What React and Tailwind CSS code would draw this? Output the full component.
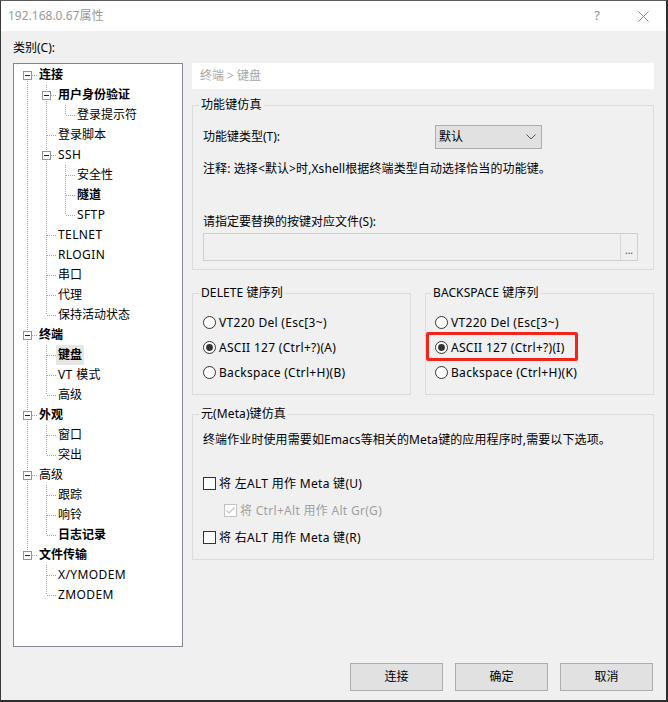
import React from "react";

const FONT = "font-['Noto_Sans','Noto_Sans_CJK_SC',sans-serif]";

function Cell({ type, box }) {
  const stroke = "#a3a3a3";
  const v = (y1, y2) => (
    <line x1="9.5" y1={y1} x2="9.5" y2={y2} stroke={stroke} strokeDasharray="1 1" shapeRendering="crispEdges" />
  );
  const h = <line x1={box ? 14 : 10} y1="10.5" x2="19" y2="10.5" stroke={stroke} strokeDasharray="1 1" shapeRendering="crispEdges" />;
  return (
    <svg width="19" height="20" className="block shrink-0">
      {type === "P" && v(0, 20)}
      {type === "T" && <>{v(0, 20)}{h}</>}
      {type === "L" && <>{v(0, 10)}{h}</>}
      {type === "F" && <>{v(10, 20)}{h}</>}
      {box && (
        <>
          <rect x="5.5" y="6.5" width="8" height="8" fill="#fff" stroke="#8e959e" shapeRendering="crispEdges" />
          <line x1="7" y1="10.5" x2="12" y2="10.5" stroke="#222" shapeRendering="crispEdges" />
        </>
      )}
    </svg>
  );
}

const tree = [
  { c: ["F"], box: true, t: "连接", b: true },
  { c: ["P", "T"], box: true, t: "用户身份验证", b: true },
  { c: ["P", "P", "L"], t: "登录提示符" },
  { c: ["P", "T"], t: "登录脚本" },
  { c: ["P", "T"], box: true, t: "SSH", l: true },
  { c: ["P", "P", "T"], t: "安全性" },
  { c: ["P", "P", "T"], t: "隧道", b: true },
  { c: ["P", "P", "L"], t: "SFTP", l: true },
  { c: ["P", "T"], t: "TELNET", l: true },
  { c: ["P", "T"], t: "RLOGIN", l: true },
  { c: ["P", "T"], t: "串口" },
  { c: ["P", "T"], t: "代理" },
  { c: ["P", "L"], t: "保持活动状态" },
  { c: ["T"], box: true, t: "终端", b: true },
  { c: ["P", "T"], t: "键盘", b: true, sel: true },
  { c: ["P", "T"], t: "VT 模式", l: true },
  { c: ["P", "L"], t: "高级" },
  { c: ["T"], box: true, t: "外观", b: true },
  { c: ["P", "T"], t: "窗口" },
  { c: ["P", "L"], t: "突出" },
  { c: ["T"], box: true, t: "高级" },
  { c: ["P", "T"], t: "跟踪" },
  { c: ["P", "T"], t: "响铃" },
  { c: ["P", "L"], t: "日志记录", b: true },
  { c: ["L"], box: true, t: "文件传输", b: true },
  { c: ["B", "T"], t: "X/YMODEM", l: true },
  { c: ["B", "L"], t: "ZMODEM", l: true },
];

function Radio({ checked, label }) {
  return (
    <div className="flex h-[25px] items-center">
      <svg width="13" height="13" className="block shrink-0">
        <circle cx="6.5" cy="6.5" r="6" fill="#fff" stroke="#333" />
        {checked && <circle cx="6.5" cy="6.5" r="3.4" fill="#333" />}
      </svg>
      <span className="ml-[3px] leading-[16px] whitespace-nowrap tracking-[0.3px]">{label}</span>
    </div>
  );
}

function Check({ label, disabled, checked, indent }) {
  const c = disabled ? "#c2c2c2" : "#333";
  return (
    <div className={`flex h-[27px] items-center ${indent ? "pl-[21px]" : ""}`}>
      <svg width="13" height="13" className="block shrink-0">
        <rect x="0.5" y="0.5" width="12" height="12" fill="#fff" stroke={c} shapeRendering="crispEdges" />
        {checked && <polyline points="2.5,6.5 5,9 10.5,3.5" fill="none" stroke={c} strokeWidth="1.2" />}
      </svg>
      <span className={`ml-[3px] leading-[16px] whitespace-nowrap tracking-[0.3px] ${disabled ? "text-[#a0a0a0]" : ""}`}>{label}</span>
    </div>
  );
}

function Legend({ children }) {
  return <legend className="ml-[-4px] px-[2px] leading-[16px] tracking-[0.1px]">{children}</legend>;
}

export default function App() {
  return (
    <div className={`${FONT} text-[12px] text-black w-[668px] h-[702px] flex flex-col border-t border-l border-r-2 border-b-2 border-t-[#5a5a5a] border-l-[#3a3a3a] border-r-[#2e2e2e] border-b-[#2e2e2e] bg-[#f0f0f0]`}>
      {/* title bar */}
      <div className="h-[30px] bg-white flex items-center justify-between shrink-0">
        <span className="pl-[7px] text-[#999999] leading-[16px]">192.168.0.67属性</span>
        <div className="flex h-full">
          <div className="w-[46px] h-full flex items-center justify-center text-[#8a8a8a] text-[13px]">?</div>
          <div className="w-[46px] h-full flex items-center justify-center">
            <svg width="11" height="11">
              <line x1="0.5" y1="0.5" x2="10.5" y2="10.5" stroke="#8a8a8a" />
              <line x1="10.5" y1="0.5" x2="0.5" y2="10.5" stroke="#8a8a8a" />
            </svg>
          </div>
        </div>
      </div>

      {/* body */}
      <div className="flex-1 flex flex-col px-[12px] pt-[9px]">
        <div className="leading-[16px] h-[16px]">类别(C):</div>
        <div className="mt-[7px] flex gap-[9px]">
          {/* tree */}
          <div className="w-[170px] h-[584px] bg-white border border-[#828790] pt-[1px] pl-[4px] shrink-0">
            {tree.map((r, i) => (
              <div key={i} className="flex h-[20px] items-stretch">
                {r.c.map((c, j) => (
                  <Cell key={j} type={c} box={r.box && j === r.c.length - 1} />
                ))}
                <span
                  className={`flex items-center px-[2px] whitespace-nowrap ${r.b ? "font-bold" : ""} ${r.sel ? "bg-[#e6e6e6]" : ""} ${r.l ? "tracking-[0.4px]" : ""}`}
                >
                  {r.t}
                </span>
              </div>
            ))}
          </div>

          {/* right column */}
          <div className="w-[462px] flex flex-col">
            <div className="h-[26px] bg-white flex items-center pl-[8px] text-[#a6a6a6]">终端 &gt; 键盘</div>

            <fieldset className="mt-[8px] border border-[#dcdcdc] pl-[10px] pb-[8px]">
              <Legend>功能键仿真</Legend>
              <div className="mt-[12px] flex items-center h-[24px]">
                <span className="w-[232px] leading-[16px]">功能键类型(T):</span>
                <div className="w-[107px] h-[24px] bg-[#e1e1e1] border border-[#adadad] flex items-center justify-between pl-[3px] pr-[5px]">
                  <span className="leading-[16px]">默认</span>
                  <svg width="10" height="6">
                    <polyline points="0.5,0.5 5,5 9.5,0.5" fill="none" stroke="#555" />
                  </svg>
                </div>
              </div>
              <div className="mt-[12px] leading-[16px] whitespace-nowrap tracking-[0.1px]">注释: 选择&lt;默认&gt;时,Xshell根据终端类型自动选择恰当的功能键。</div>
              <div className="mt-[37px] leading-[16px]">请指定要替换的按键对应文件(S):</div>
              <div className="mt-[3px] w-[435px] h-[28px] border border-[#cfcfcf] bg-[#f0f0f0] flex justify-end">
                <div className="w-[17px] h-full border-l border-[#d6d6d6] flex items-end justify-center pb-[5px] text-[10px] leading-[10px] text-[#444]">...</div>
              </div>
            </fieldset>

            <div className="mt-[15px] flex gap-[14px]">
              <fieldset className="w-[219px] border border-[#dcdcdc] pl-[10px] pb-[9px]">
                <Legend>DELETE 键序列</Legend>
                <div className="mt-[9px]">
                  <Radio label="VT220 Del (Esc[3~)" />
                  <Radio checked label="ASCII 127 (Ctrl+?)(A)" />
                  <Radio label="Backspace (Ctrl+H)(B)" />
                </div>
              </fieldset>
              <fieldset className="w-[229px] border border-[#dcdcdc] pl-[9px] pb-[9px]">
                <Legend>BACKSPACE 键序列</Legend>
                <div className="mt-[9px]">
                  <Radio label="VT220 Del (Esc[3~)" />
                  <div className="relative">
                    <Radio checked label="ASCII 127 (Ctrl+?)(I)" />
                    <div className="absolute left-[-9px] top-[-3px] w-[152px] h-[29px] border-[3px] border-[#f0261c] rounded-[2px]" />
                  </div>
                  <Radio label="Backspace (Ctrl+H)(K)" />
                </div>
              </fieldset>
            </div>

            <fieldset className="mt-[11px] border border-[#dcdcdc] pl-[10px] pb-[8px]">
              <Legend>元(Meta)键仿真</Legend>
              <div className="mt-[10px] leading-[16px] whitespace-nowrap tracking-[0.1px]">终端作业时使用需要如Emacs等相关的Meta键的应用程序时,需要以下选项。</div>
              <div className="mt-[22px]">
                <Check label="将 左ALT 用作 Meta 键(U)" />
                <Check indent disabled checked label="将 Ctrl+Alt 用作 Alt Gr(G)" />
                <Check label="将 右ALT 用作 Meta 键(R)" />
              </div>
            </fieldset>
          </div>
        </div>

        {/* buttons */}
        <div className="mt-[16px] flex justify-end gap-[12px] pr-[1px]">
          {["连接", "确定", "取消"].map((t) => (
            <div key={t} className="w-[93px] h-[28px] bg-[#e1e1e1] border border-[#adadad] flex items-center justify-center leading-[16px]">
              {t}
            </div>
          ))}
        </div>
      </div>
    </div>
  );
}
